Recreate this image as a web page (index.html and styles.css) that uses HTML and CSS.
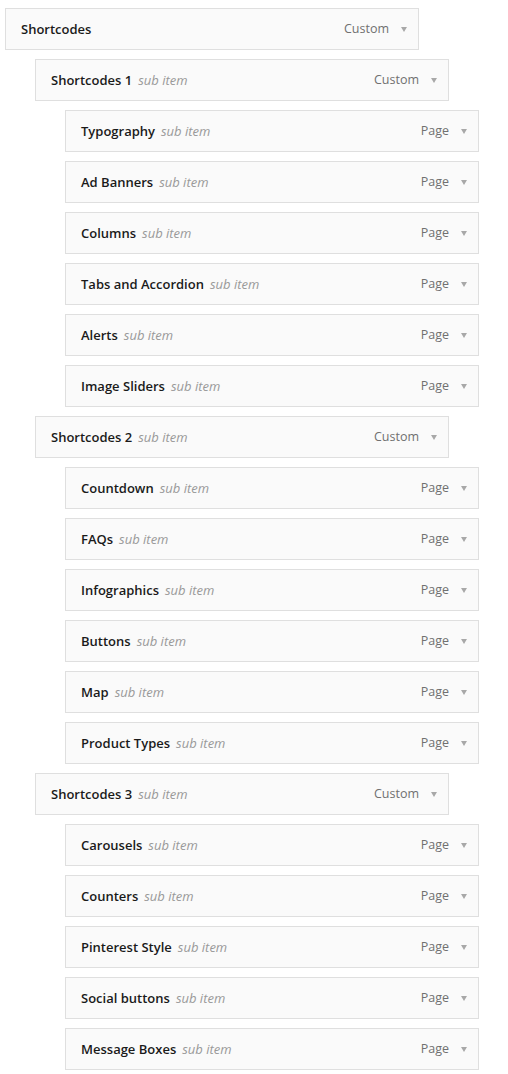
FILE: index.html
```html
<!DOCTYPE html>
<html>
<head>
<meta charset="utf-8">
<link rel="stylesheet" href="styles.css">
</head>
<body>
<ul class="menu">
  <li class="item d0"><div class="bar"><span class="title">Shortcodes</span><span class="controls"><span class="type">Custom</span><span class="arrow"></span></span></div></li>
  <li class="item d1"><div class="bar"><span class="title">Shortcodes 1</span> <span class="sub">sub item</span><span class="controls"><span class="type">Custom</span><span class="arrow"></span></span></div></li>
  <li class="item d2"><div class="bar"><span class="title">Typography</span> <span class="sub">sub item</span><span class="controls"><span class="type">Page</span><span class="arrow"></span></span></div></li>
  <li class="item d2"><div class="bar"><span class="title">Ad Banners</span> <span class="sub">sub item</span><span class="controls"><span class="type">Page</span><span class="arrow"></span></span></div></li>
  <li class="item d2"><div class="bar"><span class="title">Columns</span> <span class="sub">sub item</span><span class="controls"><span class="type">Page</span><span class="arrow"></span></span></div></li>
  <li class="item d2"><div class="bar"><span class="title">Tabs and Accordion</span> <span class="sub">sub item</span><span class="controls"><span class="type">Page</span><span class="arrow"></span></span></div></li>
  <li class="item d2"><div class="bar"><span class="title">Alerts</span> <span class="sub">sub item</span><span class="controls"><span class="type">Page</span><span class="arrow"></span></span></div></li>
  <li class="item d2"><div class="bar"><span class="title">Image Sliders</span> <span class="sub">sub item</span><span class="controls"><span class="type">Page</span><span class="arrow"></span></span></div></li>
  <li class="item d1"><div class="bar"><span class="title">Shortcodes 2</span> <span class="sub">sub item</span><span class="controls"><span class="type">Custom</span><span class="arrow"></span></span></div></li>
  <li class="item d2"><div class="bar"><span class="title">Countdown</span> <span class="sub">sub item</span><span class="controls"><span class="type">Page</span><span class="arrow"></span></span></div></li>
  <li class="item d2"><div class="bar"><span class="title">FAQs</span> <span class="sub">sub item</span><span class="controls"><span class="type">Page</span><span class="arrow"></span></span></div></li>
  <li class="item d2"><div class="bar"><span class="title">Infographics</span> <span class="sub">sub item</span><span class="controls"><span class="type">Page</span><span class="arrow"></span></span></div></li>
  <li class="item d2"><div class="bar"><span class="title">Buttons</span> <span class="sub">sub item</span><span class="controls"><span class="type">Page</span><span class="arrow"></span></span></div></li>
  <li class="item d2"><div class="bar"><span class="title">Map</span> <span class="sub">sub item</span><span class="controls"><span class="type">Page</span><span class="arrow"></span></span></div></li>
  <li class="item d2"><div class="bar"><span class="title">Product Types</span> <span class="sub">sub item</span><span class="controls"><span class="type">Page</span><span class="arrow"></span></span></div></li>
  <li class="item d1"><div class="bar"><span class="title">Shortcodes 3</span> <span class="sub">sub item</span><span class="controls"><span class="type">Custom</span><span class="arrow"></span></span></div></li>
  <li class="item d2"><div class="bar"><span class="title">Carousels</span> <span class="sub">sub item</span><span class="controls"><span class="type">Page</span><span class="arrow"></span></span></div></li>
  <li class="item d2"><div class="bar"><span class="title">Counters</span> <span class="sub">sub item</span><span class="controls"><span class="type">Page</span><span class="arrow"></span></span></div></li>
  <li class="item d2"><div class="bar"><span class="title">Pinterest Style</span> <span class="sub">sub item</span><span class="controls"><span class="type">Page</span><span class="arrow"></span></span></div></li>
  <li class="item d2"><div class="bar"><span class="title">Social buttons</span> <span class="sub">sub item</span><span class="controls"><span class="type">Page</span><span class="arrow"></span></span></div></li>
  <li class="item d2"><div class="bar"><span class="title">Message Boxes</span> <span class="sub">sub item</span><span class="controls"><span class="type">Page</span><span class="arrow"></span></span></div></li>
</ul>
</body>
</html>
```
FILE: styles.css
```css
html, body {
  margin: 0;
  padding: 0;
  background: #ffffff;
}
body {
  font-family: "Open Sans", "Liberation Sans", sans-serif;
  font-size: 13px;
  color: #222222;
}
.menu {
  list-style: none;
  margin: 0;
  padding: 8px 0 0 5px;
  display: flex;
  flex-direction: column;
  gap: 9px;
}
.item {
  width: 414px;
}
.d1 { margin-left: 30px; }
.d2 { margin-left: 60px; }
.bar {
  display: flex;
  align-items: center;
  box-sizing: border-box;
  height: 42px;
  padding: 0 11px 0 15px;
  background: #fafafa;
  border: 1px solid #dfdfdf;
  line-height: 20px;
  white-space: pre;
}
.title {
  font-weight: 600;
  color: #1a1a1a;
}
.sub {
  font-style: italic;
  color: #999999;
  margin-left: 6px;
}
.controls {
  margin-left: auto;
  display: flex;
  align-items: center;
  gap: 12px;
}
.type {
  color: #707070;
  font-size: 12.5px;
}
.arrow {
  width: 0;
  height: 0;
  border-left: 3.5px solid transparent;
  border-right: 3.5px solid transparent;
  border-top: 5px solid #a8a8a8;
  margin-top: 1px;
}
```
